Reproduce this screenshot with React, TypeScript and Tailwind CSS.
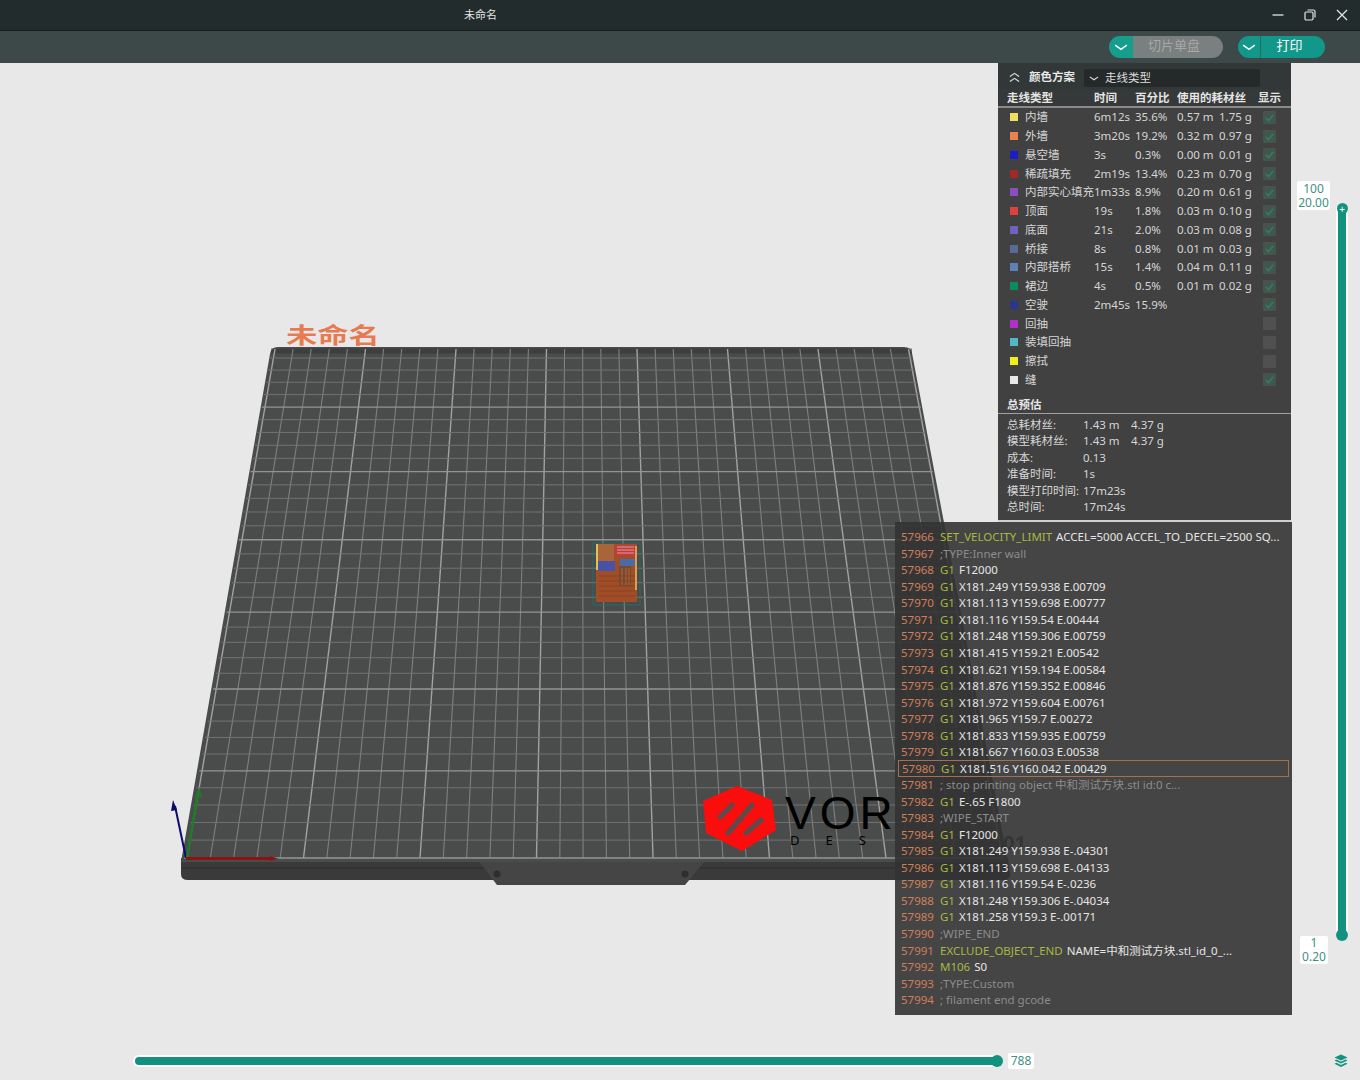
const FONT = { fontFamily: '"Noto Sans", "Noto Sans CJK SC", sans-serif' };

const lineTypes = [
  { name: "内墙", color: "bg-[#f0e060]", time: "6m12s", pct: "35.6%", m: "0.57 m", g: "1.75 g", on: true },
  { name: "外墙", color: "bg-[#e8834f]", time: "3m20s", pct: "19.2%", m: "0.32 m", g: "0.97 g", on: true },
  { name: "悬空墙", color: "bg-[#1c1cc8]", time: "3s", pct: "0.3%", m: "0.00 m", g: "0.01 g", on: true },
  { name: "稀疏填充", color: "bg-[#a02a2a]", time: "2m19s", pct: "13.4%", m: "0.23 m", g: "0.70 g", on: true },
  { name: "内部实心填充", color: "bg-[#8a50c0]", time: "1m33s", pct: "8.9%", m: "0.20 m", g: "0.61 g", on: true },
  { name: "顶面", color: "bg-[#e04040]", time: "19s", pct: "1.8%", m: "0.03 m", g: "0.10 g", on: true },
  { name: "底面", color: "bg-[#7060c0]", time: "21s", pct: "2.0%", m: "0.03 m", g: "0.08 g", on: true },
  { name: "桥接", color: "bg-[#5a6a98]", time: "8s", pct: "0.8%", m: "0.01 m", g: "0.03 g", on: true },
  { name: "内部搭桥", color: "bg-[#6080b8]", time: "15s", pct: "1.4%", m: "0.04 m", g: "0.11 g", on: true },
  { name: "裙边", color: "bg-[#0c8a60]", time: "4s", pct: "0.5%", m: "0.01 m", g: "0.02 g", on: true },
  { name: "空驶", color: "bg-[#2c3590]", time: "2m45s", pct: "15.9%", m: "", g: "", on: true },
  { name: "回抽", color: "bg-[#b030c8]", time: "", pct: "", m: "", g: "", on: false },
  { name: "装填回抽", color: "bg-[#50b8c8]", time: "", pct: "", m: "", g: "", on: false },
  { name: "擦拭", color: "bg-[#f0f020]", time: "", pct: "", m: "", g: "", on: false },
  { name: "缝", color: "bg-[#e8e8e8]", time: "", pct: "", m: "", g: "", on: true },
];

const estimates = [
  { label: "总耗材丝:", a: "1.43 m", b: "4.37 g" },
  { label: "模型耗材丝:", a: "1.43 m", b: "4.37 g" },
  { label: "成本:", a: "0.13", b: "" },
  { label: "准备时间:", a: "1s", b: "" },
  { label: "模型打印时间:", a: "17m23s", b: "" },
  { label: "总时间:", a: "17m24s", b: "" },
];

const gcode: { n: number; cmd?: string; args?: string; note?: string }[] = [
  { n: 57966, cmd: "SET_VELOCITY_LIMIT", args: "ACCEL=5000 ACCEL_TO_DECEL=2500 SQ..." },
  { n: 57967, note: ";TYPE:Inner wall" },
  { n: 57968, cmd: "G1", args: "F12000" },
  { n: 57969, cmd: "G1", args: "X181.249 Y159.938 E.00709" },
  { n: 57970, cmd: "G1", args: "X181.113 Y159.698 E.00777" },
  { n: 57971, cmd: "G1", args: "X181.116 Y159.54 E.00444" },
  { n: 57972, cmd: "G1", args: "X181.248 Y159.306 E.00759" },
  { n: 57973, cmd: "G1", args: "X181.415 Y159.21 E.00542" },
  { n: 57974, cmd: "G1", args: "X181.621 Y159.194 E.00584" },
  { n: 57975, cmd: "G1", args: "X181.876 Y159.352 E.00846" },
  { n: 57976, cmd: "G1", args: "X181.972 Y159.604 E.00761" },
  { n: 57977, cmd: "G1", args: "X181.965 Y159.7 E.00272" },
  { n: 57978, cmd: "G1", args: "X181.833 Y159.935 E.00759" },
  { n: 57979, cmd: "G1", args: "X181.667 Y160.03 E.00538" },
  { n: 57980, cmd: "G1", args: "X181.516 Y160.042 E.00429" },
  { n: 57981, note: "; stop printing object 中和测试方块.stl id:0 c..." },
  { n: 57982, cmd: "G1", args: "E-.65 F1800" },
  { n: 57983, note: ";WIPE_START" },
  { n: 57984, cmd: "G1", args: "F12000" },
  { n: 57985, cmd: "G1", args: "X181.249 Y159.938 E-.04301" },
  { n: 57986, cmd: "G1", args: "X181.113 Y159.698 E-.04133" },
  { n: 57987, cmd: "G1", args: "X181.116 Y159.54 E-.0236" },
  { n: 57988, cmd: "G1", args: "X181.248 Y159.306 E-.04034" },
  { n: 57989, cmd: "G1", args: "X181.258 Y159.3 E-.00171" },
  { n: 57990, note: ";WIPE_END" },
  { n: 57991, cmd: "EXCLUDE_OBJECT_END", args: "NAME=中和测试方块.stl_id_0_..." },
  { n: 57992, cmd: "M106", args: "S0" },
  { n: 57993, note: ";TYPE:Custom" },
  { n: 57994, note: "; filament end gcode" },
];

const Chevron = ({ className }: { className?: string }) => (
  <svg viewBox="0 0 12 6" fill="none" stroke="currentColor" strokeWidth="1.3" className={className}>
    <path d="M1 1l5 3.5L11 1" />
  </svg>
);

const WindowIcons = () => (
  <div className="flex items-center gap-[20px]">
    <svg viewBox="0 0 12 12" fill="none" stroke="currentColor" strokeWidth="1.3" className="h-3 w-3">
      <path d="M0.500 6h11" />
    </svg>
    <svg viewBox="0 0 12 12" fill="none" stroke="currentColor" strokeWidth="1.2" className="h-3 w-3">
      <rect x="1" y="3" width="8" height="8" rx="1.2" />
      <path d="M3.500 1h6a1.500 1.500 0 0 1 1.500 1.500v6" />
    </svg>
    <svg viewBox="0 0 12 12" fill="none" stroke="currentColor" strokeWidth="1.3" className="h-3 w-3">
      <path d="M1 1l10 10M11 1L1 11" />
    </svg>
  </div>
);

const LayersIcon = () => (
  <svg viewBox="0 0 14 14" className="h-[14px] w-[14px]" fill="#12917f">
    <path d="M7 0.500l6.500 3-6.500 3-6.500-3z" />
    <path d="M2.400 5.600l4.600 2.100 4.600-2.100 1.900 1-6.500 3-6.500-3z" />
    <path d="M2.400 8.800l4.600 2.100 4.600-2.100 1.900 1-6.500 3.200-6.500-3.200z" />
  </svg>
);

// 3D build plate, in page coordinates (the canvas starts at y=63)
const Plate = () => {
  const cols = Array.from({ length: 36 }, (_, i) => i);
  const rows = Array.from({ length: 35 }, (_, i) => i);
  const k = 0.816;
  const rowY = (i: number) => {
    const t = i / 34;
    return 858 - (500 * t) / (t + (1 - t) * k);
  };
  const leftX = (y: number) => 270 - (y - 347) * 0.1715;
  const rightX = (y: number) => 912 + (y - 347) * 0.1827;

  return (
    <svg viewBox="0 63 1360 1017" className="absolute inset-0 h-full w-full">
      {/* base */}
      <path d="M181 858 L1008 858 L1010 874 Q1010 880 1004 880 L188 880 Q181 880 181 874 Z" fill="#3a3a3a" />
      <path d="M182 868 L1008 868" stroke="#2c2c2c" strokeWidth="1" />
      <path d="M478 860 L497 885 L685 885 L706 860 Z" fill="#454545" />
      <circle cx="497" cy="874" r="3.500" fill="#2e2e2e" />
      <circle cx="685" cy="874" r="3.500" fill="#2e2e2e" />
      {/* top face */}
      <path d="M270 354 Q271 347 278 347 L904 347 Q911 347 912 353 L1008 862 L181 862 Z" fill="#4a4b4b" />
      <path d="M271 351 L912 351" stroke="#363636" strokeWidth="5" opacity="0.6" />
      <g className="blur-[0.4px]">
        {cols.map((i) => (
          <line
            key={i}
            x1={275 + i * 18.1}
            y1={349}
            x2={187 + i * 23.3}
            y2={858}
            stroke={i % 5 === 0 ? "#a2a2a2" : "#808080"}
            strokeWidth={i % 5 === 0 ? 1.4 : 1.1}
          />
        ))}
        {rows.map((i) => {
          const y = rowY(i);
          return (
            <line
              key={i}
              x1={leftX(y) + 2}
              y1={y}
              x2={rightX(y) - 2}
              y2={y}
              stroke={i % 5 === 0 ? "#949494" : "#727272"}
              strokeWidth={i % 5 === 0 ? 1.3 : 1}
            />
          );
        })}
      </g>
      {/* printed object */}
      <g className="blur-[0.5px]">
        <rect x="593" y="543" width="47" height="62" fill="none" stroke="#1d7a6c" strokeWidth="1" opacity="0.7" />
        <rect x="596" y="544" width="41" height="58" fill="#a04e28" />
        <rect x="596" y="544" width="18" height="18" fill="#a9653a" />
        <rect x="615" y="545" width="21" height="11" fill="#c23a3a" />
        <path d="M617 547h17M617 550h17M617 553h17" stroke="#d8a0a0" strokeWidth="1" />
        <rect x="598" y="561" width="17" height="10" fill="#4a52a8" />
        <rect x="620" y="559" width="15" height="7" fill="#4a6aa8" />
        <rect x="619" y="566" width="12" height="20" fill="#7a4a30" />
        <path d="M622 568v17M626 568v17M629 568v17" stroke="#b06a38" strokeWidth="1" />
        <path d="M599 576h36M599 581h36M599 586h36M599 591h36M599 596h36" stroke="#8a4020" strokeWidth="1" />
        <rect x="596" y="544" width="2" height="26" fill="#e0c060" />
        <rect x="635" y="546" width="2" height="44" fill="#d8a050" />
      </g>
      {/* axes */}
      <line x1="186" y1="858" x2="175" y2="806" stroke="#0c0c6a" strokeWidth="2" />
      <path d="M173 800 L177 810 L171 811 Z" fill="#0c0c6a" />
      <line x1="187" y1="858" x2="198" y2="792" stroke="#1f7a2a" strokeWidth="2.500" />
      <path d="M199 787 L202 797 L195 796 Z" fill="#1f7a2a" />
      <line x1="186" y1="858.500" x2="272" y2="858.500" stroke="#8a1414" strokeWidth="3" />
      <path d="M278 858.500 L270 856 L270 861 Z" fill="#8a1414" />
      {/* logo */}
      <g className="blur-[0.6px]">
        <path d="M737 786 L772 800 L776 830 L742 851 L706 833 L703 801 Z" fill="#fa0d0d" />
        <path
          d="M732 805 L720 817 M752 805 L728 833 M761 820 L746 833"
          stroke="#5e4a4a"
          strokeWidth="5"
          strokeLinecap="round"
        />
      </g>
    </svg>
  );
};

export default function App() {
  return (
    <div className="flex h-[1080px] w-[1360px] flex-col overflow-hidden bg-[#e8e8e8]" style={FONT}>
      {/* title bar */}
      <div className="relative flex h-[31px] shrink-0 items-center justify-end border-b border-[#151b1b] bg-[#232c2c] pr-[12px] text-[#e4e4e4]">
        <span className="absolute left-[464px] text-[11px]">未命名</span>
        <WindowIcons />
      </div>

      {/* toolbar */}
      <div className="flex h-[32px] shrink-0 items-center justify-end gap-[15px] bg-[#3d4949] pr-[35px]">
        <div className="flex h-[22px] w-[114px] overflow-hidden rounded-full text-[13px] leading-[18px]">
          <div className="flex w-[24px] items-center justify-center bg-[#159e8c] text-white">
            <Chevron className="w-[14px]" />
          </div>
          <div className="flex flex-1 items-start justify-center bg-[#7a7f7f] pr-[8px] text-[#a6a8a8]">切片单盘</div>
        </div>
        <div className="flex h-[22px] w-[87px] overflow-hidden rounded-full text-[13px] leading-[18px] text-white">
          <div className="flex w-[23px] items-center justify-center border-r border-[#2a6a62] bg-[#12988a]">
            <Chevron className="w-[14px]" />
          </div>
          <div className="flex flex-1 items-start justify-center bg-[#12988a] pr-[7px]">打印</div>
        </div>
      </div>

      {/* 3D canvas */}
      <div className="relative flex-1">
        <Plate />
        <span className="absolute left-[286px] top-[257px] origin-left scale-x-[1.42] text-[22px] leading-[28px] font-bold text-[#e87a52]">
          未命名
        </span>
        <div className="absolute left-[785px] top-[730px] flex w-[110px] flex-col text-black">
          <span
            className="text-[46px] leading-[40px] tracking-[4px]"
            style={{ fontFamily: '"Liberation Sans", sans-serif' }}
          >
            VOR
          </span>
          <span className="pl-[5px] text-[13px] leading-[14px] tracking-[26px] whitespace-nowrap">DES</span>
        </div>
        <span className="absolute left-[1003px] top-[768px] text-[20px] leading-[24px] font-bold text-[#4a4a4a]">01</span>

        {/* line type panel */}
        <div className="absolute left-[998px] top-0 flex h-[459px] w-[293px] flex-col border-b-2 border-[#d0d0d0] bg-[#414141] text-[11.5px] leading-[16px] text-[#d6d6d6]">
          <div className="flex h-[26px] shrink-0 items-center gap-[9px] bg-[#323737] pl-[11px] pt-[2px]">
            <div className="flex w-[11px] flex-col gap-[1px] text-[#dddddd]">
              <Chevron className="w-[11px] rotate-180" />
              <Chevron className="-mt-[1px] w-[11px] rotate-180" />
            </div>
            <span className="font-bold text-[#e8e8e8]">颜色方案</span>
            <div className="mt-[2px] flex h-[18px] w-[176px] items-center gap-[6px] rounded-[2px] bg-[#26292a] pl-[5px] text-[#dcdcdc]">
              <Chevron className="w-[10px]" />
              走线类型
            </div>
          </div>
          <div className="grid h-[19px] shrink-0 grid-cols-[87px_41px_42px_81px_1fr] items-center border-b-2 border-[#8a8a8a] bg-[#363939] pl-[9px] font-bold text-[#e4e4e4]">
            <span>走线类型</span>
            <span>时间</span>
            <span>百分比</span>
            <span>使用的耗材丝</span>
            <span>显示</span>
          </div>
          <div>
            {lineTypes.map((row) => (
              <div
                key={row.name}
                className="grid h-[18.75px] grid-cols-[15px_69px_41px_42px_42px_44px_1fr] items-center whitespace-nowrap pl-[12px]"
              >
                <span className={`h-[8px] w-[8px] ${row.color}`} />
                <span>{row.name}</span>
                <span>{row.time}</span>
                <span>{row.pct}</span>
                <span>{row.m}</span>
                <span>{row.g}</span>
                <span
                  className={`flex h-[13px] w-[13px] items-center justify-center rounded-[1px] ${
                    row.on ? "bg-[#46544e]" : "bg-[#505050]"
                  }`}
                >
                  {row.on && (
                    <svg viewBox="0 0 12 12" fill="none" stroke="#2a7d62" strokeWidth="2" className="h-[11px] w-[11px]">
                      <path d="M2 6.500l3 3 5-6.500" />
                    </svg>
                  )}
                </span>
              </div>
            ))}
          </div>
          <div className="mt-[7px] flex h-[18px] shrink-0 items-center border-b border-[#a0a0a0] pl-[9px] font-bold text-[#e4e4e4]">
            总预估
          </div>
          <div className="pt-[2px]">
            {estimates.map((row) => (
              <div key={row.label} className="grid h-[16.5px] grid-cols-[76px_48px_1fr] items-center whitespace-nowrap pl-[9px]">
                <span>{row.label}</span>
                <span>{row.a}</span>
                <span>{row.b}</span>
              </div>
            ))}
          </div>
        </div>

        {/* gcode viewer */}
        <div className="absolute left-[895px] top-[459px] flex h-[493px] w-[397px] flex-col bg-[#333333]/90 pl-[3px] pr-[3px] pt-[7px] text-[11.5px] leading-[16px]">
          {gcode.map((line) => (
            <div
              key={line.n}
              className={`flex h-[16.54px] shrink-0 items-center whitespace-nowrap pl-[3px] ${
                line.n === 57980 ? "border border-[#a3714f]" : ""
              }`}
            >
              <span className="w-[39px] shrink-0 text-[#d07f58]">{line.n}</span>
              {line.cmd && <span className="mr-[4px] text-[#a9b840]">{line.cmd}</span>}
              {line.args && <span className="text-[#e6e6e6]">{line.args}</span>}
              {line.note && <span className="text-[#8c8c8c]">{line.note}</span>}
            </div>
          ))}
        </div>

        {/* vertical layer slider */}
        <div className="absolute left-[1297px] top-[118px] flex h-[29px] w-[33px] flex-col items-center justify-center rounded-[2px] bg-white text-[12px] leading-[14px] text-[#3f8f85]">
          <span>100</span>
          <span>20.00</span>
        </div>
        <div className="absolute left-[1336px] top-[140px] flex h-[738px] w-[12px] flex-col items-center">
          <span className="absolute top-0 z-10 flex h-[11px] w-[11px] items-center justify-center rounded-full bg-[#12917f] text-[10px] leading-none text-white">
            +
          </span>
          <div className="mt-[6px] h-[726px] w-[8px] bg-[#12917f] shadow-[0_0_0_2px_#ffffff]" />
          <span className="absolute bottom-0 h-[12px] w-[12px] rounded-full bg-[#12917f]" />
        </div>
        <div className="absolute left-[1300px] top-[873px] flex h-[28px] w-[28px] flex-col items-center justify-center rounded-[2px] bg-white text-[12px] leading-[14px] text-[#3f8f85]">
          <span>1</span>
          <span>0.20</span>
        </div>

        {/* horizontal move slider */}
        <div className="absolute left-[135px] top-[992px] flex h-[12px] w-[900px] items-center">
          <div className="h-[8px] w-[862px] rounded-full bg-[#12917f] shadow-[0_0_0_2px_#ffffff]" />
          <span className="-ml-[6px] h-[12px] w-[12px] shrink-0 rounded-full bg-[#12917f]" />
          <span className="ml-[5px] flex h-[16px] w-[26px] shrink-0 items-center justify-center rounded-[2px] bg-white text-[12px] text-[#3f8f85]">
            788
          </span>
        </div>
        <div className="absolute left-[1334px] top-[991px]">
          <LayersIcon />
        </div>
      </div>
    </div>
  );
}
